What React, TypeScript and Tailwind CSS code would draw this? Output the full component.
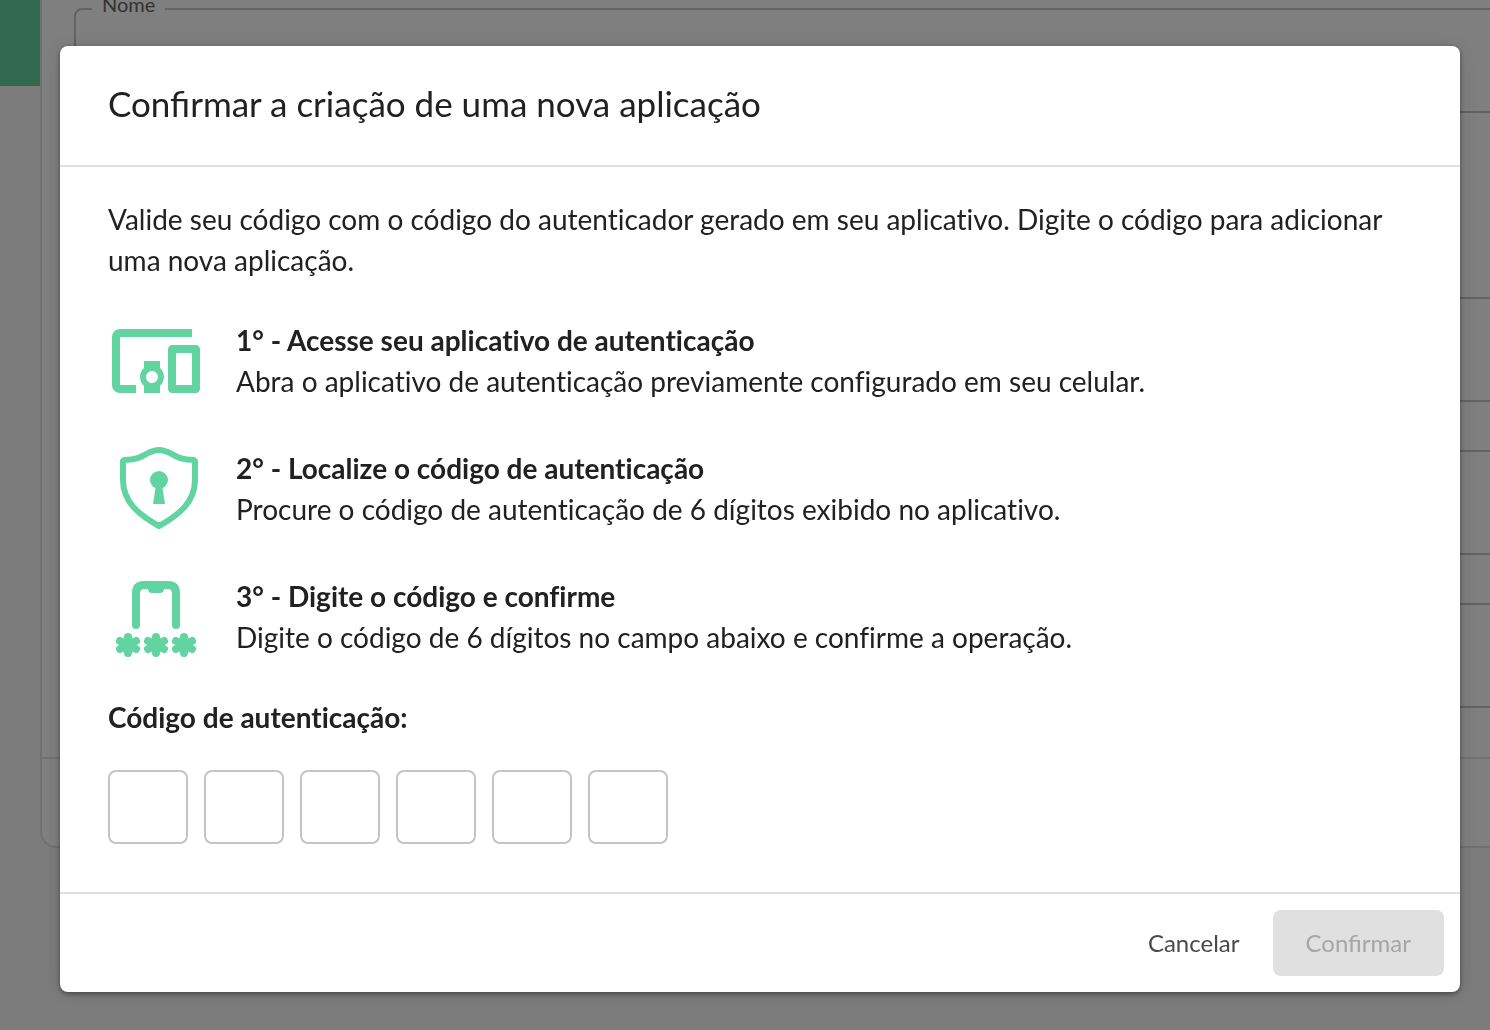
import { useState } from "react";
import type { ReactNode } from "react";

function DevicesIcon() {
  return (
    <svg viewBox="0 0 24 24" fill="currentColor" className="size-24" aria-hidden="true">
      <path d="M3 6h18V4H3c-1.1 0-2 .9-2 2v12c0 1.1.9 2 2 2h4v-2H3V6zm10 6H9v1.78c-.61.55-1 1.33-1 2.22s.39 1.67 1 2.22V20h4v-1.78c.61-.55 1-1.34 1-2.22s-.39-1.67-1-2.22V12zm-2 5.5c-.83 0-1.5-.67-1.5-1.5s.67-1.5 1.5-1.5 1.5.67 1.5 1.5-.67 1.5-1.5 1.5zM22 8h-6c-.5 0-1 .5-1 1v10c0 .5.5 1 1 1h6c.5 0 1-.5 1-1V9c0-.5-.5-1-1-1zm-1 10h-4v-8h4v8z" />
    </svg>
  );
}

function ShieldIcon() {
  return (
    <svg viewBox="0 0 96 96" className="size-24" aria-hidden="true">
      <path
        d="M51 9C38 9 37 19 16 19L15 20V39C15 61 31 74 51 85C71 74 87 61 87 39V20L86 19C65 19 64 9 51 9Z"
        fill="none"
        stroke="currentColor"
        strokeWidth="6"
        strokeLinejoin="round"
      />
      <circle cx="51" cy="39" r="9" fill="currentColor" />
      <path d="M48 44h6l3 19H45z" fill="currentColor" />
    </svg>
  );
}

function Asterisk({ x }: { x: number }) {
  return (
    <g stroke="currentColor" strokeWidth="8" strokeLinecap="round">
      <path d={`M${x} 68v16M${x - 8} 72l16 8M${x - 8} 80l16 -8`} />
      <circle cx={x} cy="76" r="8" fill="currentColor" stroke="none" />
    </g>
  );
}

function PhoneCodeIcon() {
  return (
    <svg viewBox="0 0 96 96" className="size-24" aria-hidden="true">
      <path
        d="M28 56V24Q28 16 36 16H60Q68 16 68 24V56"
        fill="none"
        stroke="currentColor"
        strokeWidth="8"
        strokeLinecap="round"
      />
      <path
        d="M32 24V19H36C33.500 20 32 21.500 32 24ZM64 24V19H60C62.500 20 64 21.500 64 24ZM40 19H56V20C56 23 54 24 52 24H44C42 24 40 23 40 20Z"
        fill="currentColor"
      />
      <Asterisk x={20} />
      <Asterisk x={48} />
      <Asterisk x={76} />
    </svg>
  );
}

function Step({ icon, title, text }: { icon: ReactNode; title: string; text: string }) {
  return (
    <li className="flex items-center gap-8">
      <span className="shrink-0 text-[#62d4a2]">{icon}</span>
      <div>
        <h3 className="font-bold">{title}</h3>
        <p>{text}</p>
      </div>
    </li>
  );
}

function OutlinedField() {
  return <div className="h-[105px] rounded-lg border-2 border-[#c4c4c4]" />;
}

function PageBehind() {
  return (
    <div className="flex h-screen overflow-hidden bg-[#f9f9f9]">
      <div className="h-[86px] w-10 shrink-0 bg-[#62d4a2]" />
      <div className="flex grow flex-col self-start rounded-bl-2xl border-b-2 border-l-2 border-[#e0e0e0] bg-white">
        <div className="-mr-16 -mt-1 flex flex-col px-8">
          <fieldset className="h-[117px] rounded-lg border-2 border-[#c4c4c4] px-4">
            <legend className="px-2.5 pb-2.5 text-xl leading-4 text-[#666]">Nome</legend>
          </fieldset>
          <div className="mt-[184px]">
            <OutlinedField />
          </div>
          <div className="mt-12">
            <OutlinedField />
          </div>
          <div className="mt-12 mb-[49px]">
            <OutlinedField />
          </div>
        </div>
        <div className="h-[89px] border-t-2 border-[#e0e0e0]" />
      </div>
    </div>
  );
}

export default function App() {
  const [digits, setDigits] = useState<string[]>(["", "", "", "", "", ""]);
  const complete = digits.every((d) => d !== "");

  return (
    <div className="font-['Lato',sans-serif] text-[#212121]">
      <PageBehind />
      <div className="fixed inset-0 overflow-y-auto bg-black/50 pt-[46px] pr-[30px] pb-9 pl-[60px]">
        <div
          role="dialog"
          aria-modal="true"
          aria-labelledby="dialog-title"
          className="rounded-lg bg-white text-[28px] leading-[41px] shadow-[0_2px_5px_rgba(0,0,0,0.4),0_2px_20px_rgba(0,0,0,0.12)]"
        >
          <header className="border-b-2 border-[#e0e0e0] px-12 pt-9 pb-10">
            <h2 id="dialog-title" className="text-[35px] leading-[43px]">
              Confirmar a criação de uma nova aplicação
            </h2>
          </header>

          <div className="px-12 pt-8 pb-12 [font-variant-ligatures:none]">
            <p>
              Valide seu código com o código do autenticador gerado em seu aplicativo. Digite o código para adicionar
              uma nova aplicação.
            </p>
            <ol className="mt-8 flex flex-col gap-8">
              <Step
                icon={<DevicesIcon />}
                title="1° - Acesse seu aplicativo de autenticação"
                text="Abra o aplicativo de autenticação previamente configurado em seu celular."
              />
              <Step
                icon={<ShieldIcon />}
                title="2° - Localize o código de autenticação"
                text="Procure o código de autenticação de 6 dígitos exibido no aplicativo."
              />
              <Step
                icon={<PhoneCodeIcon />}
                title="3° - Digite o código e confirme"
                text="Digite o código de 6 dígitos no campo abaixo e confirme a operação."
              />
            </ol>
            <p id="code-label" className="mt-8 font-bold">
              Código de autenticação:
            </p>
            <div role="group" aria-labelledby="code-label" className="mt-8 flex gap-4">
              {digits.map((digit, i) => (
                <input
                  key={i}
                  type="text"
                  inputMode="numeric"
                  maxLength={1}
                  aria-labelledby="code-label"
                  value={digit}
                  onChange={(e) => setDigits(digits.map((d, j) => (j === i ? e.target.value : d)))}
                  className="h-[74px] w-20 rounded-lg border-2 border-[#c4c4c4] bg-white text-center"
                />
              ))}
            </div>
          </div>

          <footer className="flex justify-end gap-4 border-t-2 border-[#e0e0e0] p-4 text-2xl">
            <button type="button" className="h-[66px] rounded-lg px-[17px] text-[#4a4a4a]">
              Cancelar
            </button>
            <button
              type="button"
              disabled={!complete}
              className="h-[66px] rounded-lg bg-[#62d4a2] px-[33px] text-white disabled:bg-[#e0e0e0] disabled:text-[#a6a6a6]"
            >
              Confirmar
            </button>
          </footer>
        </div>
      </div>
    </div>
  );
}
